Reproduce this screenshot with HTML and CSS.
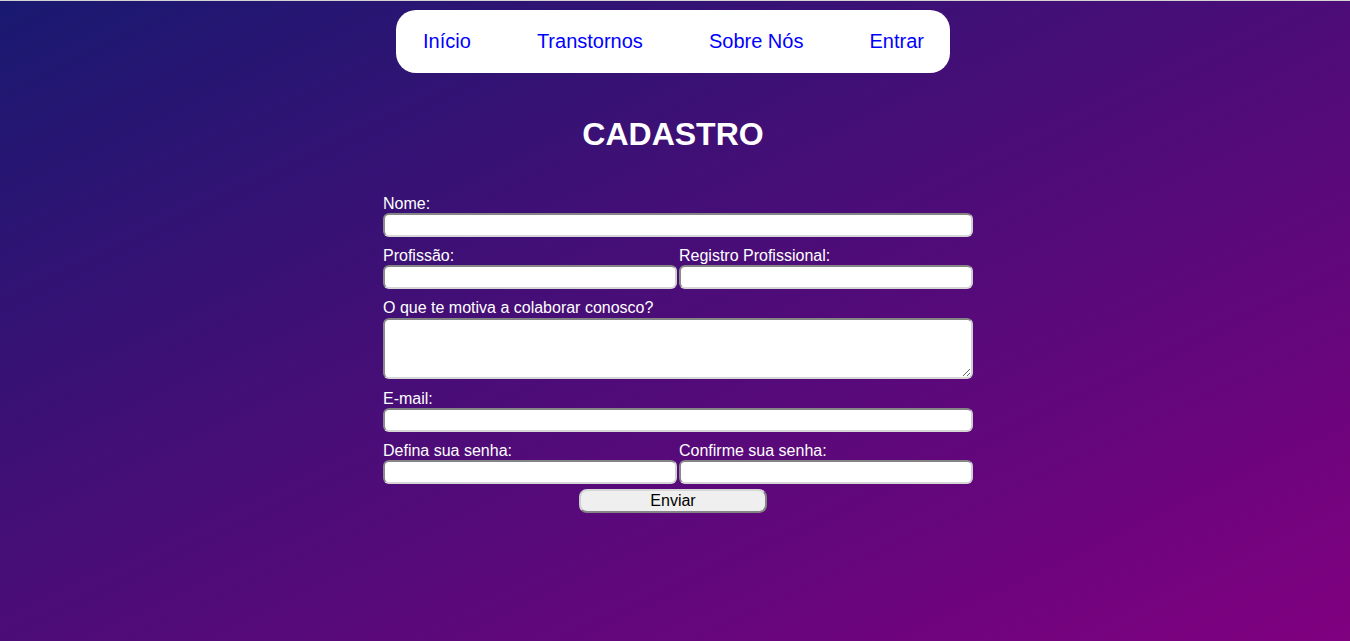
FILE: index.html
```html
<!DOCTYPE html>
<html lang="pt-BR">
<head>
<meta charset="utf-8">
<title>Cadastro</title>
<link rel="stylesheet" href="styles.css">
</head>
<body>
<nav class="topnav">
  <a href="#" class="navlink">Início</a>
  <a href="#" class="navlink">Transtornos</a>
  <a href="#" class="navlink">Sobre Nós</a>
  <a href="#" class="navlink">Entrar</a>
</nav>
<h1 class="title">CADASTRO</h1>
<form class="form">
  <div class="fields">
    <div class="field full">
      <label class="label" for="nome">Nome:</label>
      <input class="input" id="nome" type="text">
    </div>
    <div class="field">
      <label class="label" for="prof">Profissão:</label>
      <input class="input" id="prof" type="text">
    </div>
    <div class="field">
      <label class="label" for="reg">Registro Profissional:</label>
      <input class="input" id="reg" type="text">
    </div>
    <div class="field full">
      <label class="label" for="mot">O que te motiva a colaborar conosco?</label>
      <textarea class="textarea" id="mot"></textarea>
    </div>
    <div class="field full">
      <label class="label" for="email">E-mail:</label>
      <input class="input" id="email" type="email">
    </div>
    <div class="field">
      <label class="label" for="s1">Defina sua senha:</label>
      <input class="input" id="s1" type="password">
    </div>
    <div class="field">
      <label class="label" for="s2">Confirme sua senha:</label>
      <input class="input" id="s2" type="password">
    </div>
  </div>
  <div class="actions">
    <button class="button" type="submit">Enviar</button>
  </div>
</form>
</body>
</html>
```
FILE: styles.css
```css
html {
  min-height: 100%;
  border-top: 1px solid #d4d4d4;
  background: linear-gradient(to bottom right, #191970, #800080);
}
body {
  margin: 0;
  padding: 9px 4px 0 0;
  font-family: "Liberation Sans", Arial, sans-serif;
  color: #fff;
}
.topnav {
  width: 554px;
  height: 63px;
  box-sizing: border-box;
  margin: 0 auto;
  padding: 0 26px 0 27px;
  background: #fff;
  border-radius: 20px;
  display: flex;
  align-items: center;
  justify-content: space-between;
}
.navlink {
  color: #0000ff;
  text-decoration: none;
  font-size: 20px;
}
.title {
  margin: 43px 0 0;
  text-align: center;
  font-size: 32px;
  line-height: 37px;
  font-weight: bold;
}
.form {
  width: 600px;
  margin: 42px auto 0;
}
.fields {
  margin-left: 10px;
  display: grid;
  grid-template-columns: 294px 294px;
  column-gap: 2px;
  row-gap: 10px;
}
.field {
  display: flex;
  flex-direction: column;
}
.field.full {
  grid-column: 1 / -1;
}
.label {
  font-size: 16px;
  line-height: 18px;
  height: 18px;
  white-space: nowrap;
}
.input {
  display: block;
  box-sizing: border-box;
  width: 100%;
  height: 24px;
  margin: 0;
  padding: 1px 4px;
  border: 2px solid;
  border-color: #858585 #cfcfcf #d6d6d6 #8a8a8a;
  border-radius: 6px;
  background: #fff;
  font: 14px "Liberation Sans", Arial, sans-serif;
}
.textarea {
  display: block;
  box-sizing: border-box;
  width: 100%;
  height: 61px;
  margin: 1px 0 1px;
  padding: 2px 4px;
  border: 2px solid;
  border-color: #858585 #cfcfcf #d6d6d6 #8a8a8a;
  border-radius: 6px;
  background: #fff;
  font: 14px "Liberation Sans", Arial, sans-serif;
}
.actions {
  display: flex;
  justify-content: center;
  margin-top: 5px;
}
.button {
  width: 188px;
  height: 24px;
  box-sizing: border-box;
  padding: 0;
  border: 2px solid;
  border-color: #d6d6d6 #858585 #858585 #cfcfcf;
  border-radius: 8px;
  background: #efefef;
  color: #000;
  font: 16px "Liberation Sans", Arial, sans-serif;
}
```
